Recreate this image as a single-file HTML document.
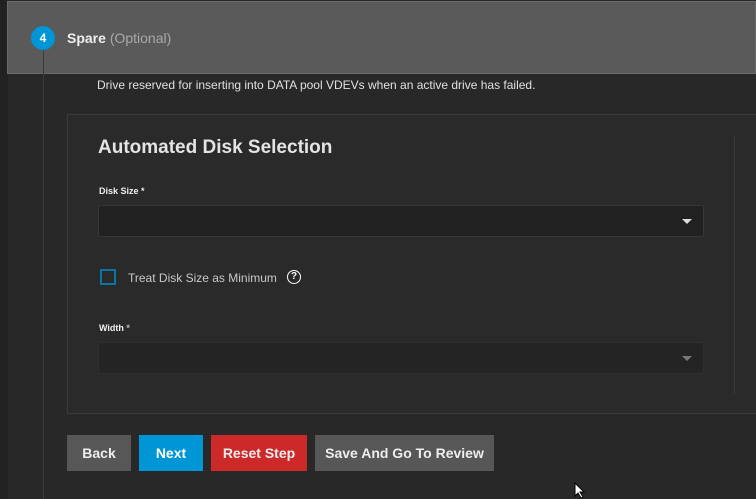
<!DOCTYPE html>
<html><head><style>
*{box-sizing:border-box;margin:0;padding:0}
body{width:756px;height:499px;background:#282828;font-family:"Liberation Sans",sans-serif;position:relative;overflow:hidden;color:#e0e0e0}
.abs{position:absolute}
.btn{position:absolute;top:435px;height:36px;color:#eee;font-weight:bold;font-size:14px;display:flex;align-items:center;justify-content:center}
.sel{position:absolute;left:98px;width:606px;height:32px;background:#212121;border:1px solid #363636;border-radius:2px}
.arr{position:absolute;right:11px;top:13px;width:0;height:0;border-left:5px solid transparent;border-right:5px solid transparent;border-top:5px solid #ddd}
</style></head><body>
<div class="abs" style="left:0;top:0;width:8px;height:499px;background:#222"></div>
<div class="abs" style="left:7px;top:1px;width:749px;height:73px;background:#5a5a5a;border:1px solid #6a6a6a"></div>
<div class="abs" style="left:43px;top:50px;width:1px;height:449px;background:#3c3c3c"></div>
<div class="abs" style="left:31px;top:26px;width:24px;height:24px;border-radius:50%;background:#0095d5;color:#fff;font-size:12px;font-weight:bold;text-align:center;line-height:24px">4</div>
<div class="abs" style="left:67px;top:30px;font-size:14px;font-weight:bold;color:#eee">Spare <span style="font-weight:normal;color:#a8a8a8">(Optional)</span></div>
<div class="abs" style="left:97px;top:78px;font-size:12px;color:#e0e0e0">Drive reserved for inserting into DATA pool VDEVs when an active drive has failed.</div>
<div class="abs" style="left:67px;top:114px;width:700px;height:300px;border:1px solid #3a3a3a;background:#2a2a2a"></div>
<div class="abs" style="left:734px;top:135px;width:1px;height:259px;background:#3a3a3a"></div>
<div class="abs" style="left:98px;top:137px;font-size:19px;font-weight:bold;color:#e4e4e4">Automated Disk Selection</div>
<div class="abs" style="left:99px;top:186px;font-size:9px;font-weight:bold;color:#eee">Disk Size *</div>
<div class="sel" style="top:205px"><div class="arr"></div></div>
<div class="abs" style="left:100px;top:269px;width:16px;height:16px;border:2px solid #0a74a6"></div>
<div class="abs" style="left:128px;top:271px;font-size:12px;color:#c8c8c8">Treat Disk Size as Minimum</div>
<div class="abs" style="left:287px;top:270px;width:14px;height:14px;border:1.5px solid #fff;border-radius:50%;font-size:10px;font-weight:bold;color:#fff;text-align:center;line-height:11px">?</div>
<div class="abs" style="left:99px;top:323px;font-size:9px;font-weight:bold;color:#eee">Width <span style="color:#bbb">*</span></div>
<div class="sel" style="top:342px;background:#242424;border-color:#2f2f2f"><div class="arr" style="border-top-color:#777"></div></div>
<div class="btn" style="left:67px;width:64px;background:#575757">Back</div>
<div class="btn" style="left:139px;width:64px;background:#0095d5;color:#fff">Next</div>
<div class="btn" style="left:211px;width:96px;background:#ce2929">Reset Step</div>
<div class="btn" style="left:315px;width:179px;background:#575757">Save And Go To Review</div>
<svg class="abs" style="left:574px;top:482px" width="12" height="17"><path d="M1 1 L1 14 L4 11 L7 16 L9 15 L6 10 L10 10 Z" fill="#fff" stroke="#000" stroke-width="1"/></svg>
</body></html>
